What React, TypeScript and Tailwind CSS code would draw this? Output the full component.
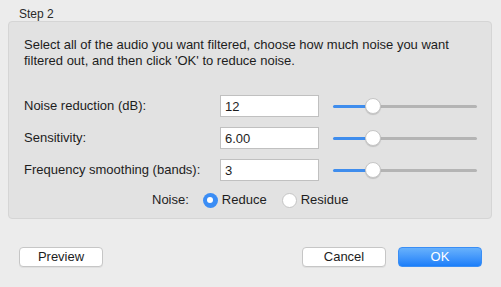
import React from 'react';

const font = { fontFamily: '"Liberation Sans", Arial, sans-serif' };

interface RowProps {
  label: string;
  value: string;
}

function SliderRow({ label, value }: RowProps) {
  return (
    <div className="flex items-center h-[22px]">
      <div className="w-[196px] text-[13px] text-[#1d1d1d]">{label}</div>
      <input
        readOnly
        value={value}
        className="w-[99px] h-[22px] bg-white border border-[#c0c0c0] px-[4px] text-[13px] text-[#1d1d1d] outline-none"
        style={font}
      />
      <div className="relative ml-[14px] w-[144px] h-[22px] flex items-center">
        <div className="h-[3px] w-[34px] bg-[#3f8ded] rounded-l-full" />
        <div className="h-[3px] flex-1 bg-[#b4b4b4] rounded-r-full" />
        <div className="absolute left-[32px] top-[3px] w-[16px] h-[16px] rounded-full bg-white border border-[#c6c6c6] shadow-[0_1px_1px_rgba(0,0,0,0.15)]" />
      </div>
    </div>
  );
}

export default function App() {
  return (
    <div className="w-[501px] h-[287px] bg-[#ececec] select-none" style={font}>
      <div className="pl-[19px] pt-[7px] h-[21px] text-[12px] leading-[14px] text-[#2a2a2a]">Step 2</div>
      <div className="mx-[8px] w-[484px] h-[198px] bg-[#e2e2e2] border border-[#d5d5d5] rounded-[4px] pl-[15px] pt-[15px]">
        <p className="text-[13px] leading-[16px] text-[#1d1d1d]">
          Select all of the audio you want filtered, choose how much noise you want
          <br />
          filtered out, and then click 'OK' to reduce noise.
        </p>
        <div className="mt-[26px] flex flex-col gap-[10px]">
          <SliderRow label="Noise reduction (dB):" value="12" />
          <SliderRow label="Sensitivity:" value="6.00" />
          <SliderRow label="Frequency smoothing (bands):" value="3" />
        </div>
        <div className="mt-[11px] flex items-center h-[16px] pl-[128px] text-[13px] text-[#1d1d1d]">
          <span>Noise:</span>
          <span className="ml-[14px] w-[15px] h-[15px] rounded-full bg-[#3b8df5] flex items-center justify-center">
            <span className="w-[6px] h-[6px] rounded-full bg-white" />
          </span>
          <span className="ml-[4px]">Reduce</span>
          <span className="ml-[15px] w-[15px] h-[15px] rounded-full bg-white border border-[#c4c4c4]" />
          <span className="ml-[4px]">Residue</span>
        </div>
      </div>
      <div className="flex items-center mt-[28px] px-[19px]">
        <button className="w-[84px] h-[20px] bg-white border border-[#c6c6c6] rounded-[4px] text-[13px] leading-[18px] text-[#1d1d1d] shadow-[0_1px_0_rgba(0,0,0,0.05)]">
          Preview
        </button>
        <div className="flex-1" />
        <button className="w-[84px] h-[20px] bg-white border border-[#c6c6c6] rounded-[4px] text-[13px] leading-[18px] text-[#1d1d1d] shadow-[0_1px_0_rgba(0,0,0,0.05)]">
          Cancel
        </button>
        <button className="ml-[12px] w-[84px] h-[20px] rounded-[4px] bg-gradient-to-b from-[#67b1fc] to-[#1a7ef9] border border-[#3a8ef5] text-[13px] leading-[18px] text-white">
          OK
        </button>
      </div>
    </div>
  );
}
